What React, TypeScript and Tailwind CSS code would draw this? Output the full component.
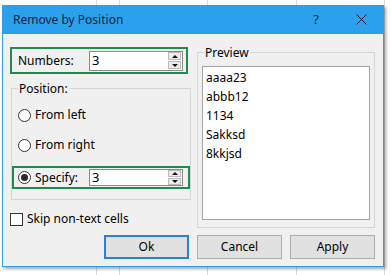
import React from "react";

const font = "font-['Noto_Sans','Open_Sans',sans-serif]";

const Spinner = ({ small }: { small?: boolean }) => (
  <div className="flex flex-col gap-[1px] mr-[1px]">
    <div
      className={`w-[13px] ${small ? "h-[7px]" : "h-[8px]"} bg-[#ececec] border border-[#b9b9b9] flex items-center justify-center`}
    >
      <div className="w-0 h-0 border-x-[3px] border-x-transparent border-b-[3px] border-b-[#111]" />
    </div>
    <div
      className={`w-[13px] ${small ? "h-[7px]" : "h-[8px]"} bg-[#ececec] border border-[#b9b9b9] flex items-center justify-center`}
    >
      <div className="w-0 h-0 border-x-[3px] border-x-transparent border-t-[3px] border-t-[#111]" />
    </div>
  </div>
);

const NumInput = ({ h, small }: { h: string; small?: boolean }) => (
  <div
    className={`${h} w-[94px] bg-white border border-[#8a8a8a] flex items-center justify-between pl-[2px]`}
  >
    <span className="text-[13px] leading-none text-black">3</span>
    <Spinner small={small} />
  </div>
);

const Radio = ({ on }: { on?: boolean }) => (
  <div className="w-[13px] h-[13px] rounded-full border border-[#333] bg-white flex items-center justify-center">
    {on && <div className="w-[7px] h-[7px] rounded-full bg-[#2a2a2a]" />}
  </div>
);

const Button = ({ label, focus }: { label: string; focus?: boolean }) => (
  <div
    className={`w-[85px] h-[24px] flex items-center justify-center bg-[#e1e1e1] text-[12px] text-black ${
      focus ? "border-2 border-[#2b7fd4]" : "border border-[#adadad]"
    }`}
  >
    {label}
  </div>
);

const preview = ["aaaa23", "abbb12", "1134", "Sakksd", "8kkjsd"];

export default function App() {
  return (
    <div className={`relative w-[391px] h-[275px] bg-white overflow-hidden ${font}`}>
      {/* spreadsheet behind the dialog */}
      <div className="flex h-full">
        <div className="w-[97px] h-full border-r border-[#d9d9d9]" />
        <div className="w-[23px] h-full border-r border-[#d9d9d9]" />
        <div className="w-[88px] h-full border-r border-[#d9d9d9]" />
        <div className="w-[89px] h-full border-r border-[#d9d9d9]" />
        <div className="w-[88px] h-full border-r border-[#d9d9d9]" />
      </div>

      {/* dialog */}
      <div className="absolute left-[2px] top-[5px] w-[382px] h-[262px] flex flex-col bg-[#f0f0f0] border border-t-0 border-[#2d9ee9] shadow-[2px_2px_3px_rgba(0,0,0,0.35)]">
        <div className="h-[29px] -mx-[1px] bg-[#2ba1ee] flex items-center pl-[11px] pr-[17px] text-[#1a1d3a]">
          <span className="text-[12px]">Remove by Position</span>
          <span className="ml-auto text-[13px] mr-[37px]">?</span>
          <svg width="11" height="11" viewBox="0 0 11 11">
            <path d="M0.5 0.5 L10.5 10.5 M10.5 0.5 L0.5 10.5" stroke="#1a1d3a" strokeWidth="1" />
          </svg>
        </div>

        <div className="flex-1 flex flex-col pl-[7px] pr-[8px] text-[12px] text-black">
          <div className="flex">
            {/* left column */}
            <div className="w-[180px] flex flex-col">
              <div className="mt-[13px] h-[27px] w-[178px] border-2 border-[#1f8c4c] flex items-center pl-[6px] pr-[3px]">
                <span>Numbers:</span>
                <div className="ml-auto">
                  <NumInput h="h-[20px]" />
                </div>
              </div>

              <fieldset className="mt-[7px] ml-[1px] w-[178px] border border-[#d5d5d5] pb-[10px]">
                <legend className="ml-[6px] px-[1px] leading-[15px]">Position:</legend>
                <div className="pt-[4px]">
                  <div className="h-[30px] flex items-center gap-[4px] pl-[6px]">
                    <Radio />
                    <span>From left</span>
                  </div>
                  <div className="h-[30px] flex items-center gap-[4px] pl-[6px]">
                    <Radio />
                    <span>From right</span>
                  </div>
                  <div className="mt-[6px] h-[23px] w-[178px] border-2 border-[#1f8c4c] flex items-center gap-[4px] pl-[4px] pr-[5px]">
                    <Radio on />
                    <span>Specify:</span>
                    <div className="ml-auto">
                      <NumInput h="h-[17px]" small />
                    </div>
                  </div>
                </div>
              </fieldset>

              <div className="mt-[10px] flex items-center gap-[4px]">
                <div className="w-[13px] h-[13px] border border-[#333] bg-white" />
                <span>Skip non-text cells</span>
              </div>
            </div>

            {/* right column */}
            <fieldset className="ml-[7px] mt-[11px] w-[178px] border border-[#d5d5d5] pb-[6px]">
              <legend className="ml-[6px] px-[1px] leading-[15px]">Preview</legend>
              <div className="mt-[6px] ml-[4px] w-[168px] h-[154px] bg-white border border-[#a5a5a5] pt-[1px] pl-[3px]">
                {preview.map((p) => (
                  <div key={p} className="h-[19px] leading-[19px]">
                    {p}
                  </div>
                ))}
              </div>
            </fieldset>
          </div>

          <div className="mt-auto mb-[7px] flex justify-end gap-[8px]">
            <Button label="Ok" focus />
            <Button label="Cancel" />
            <Button label="Apply" />
          </div>
        </div>
      </div>
    </div>
  );
}
